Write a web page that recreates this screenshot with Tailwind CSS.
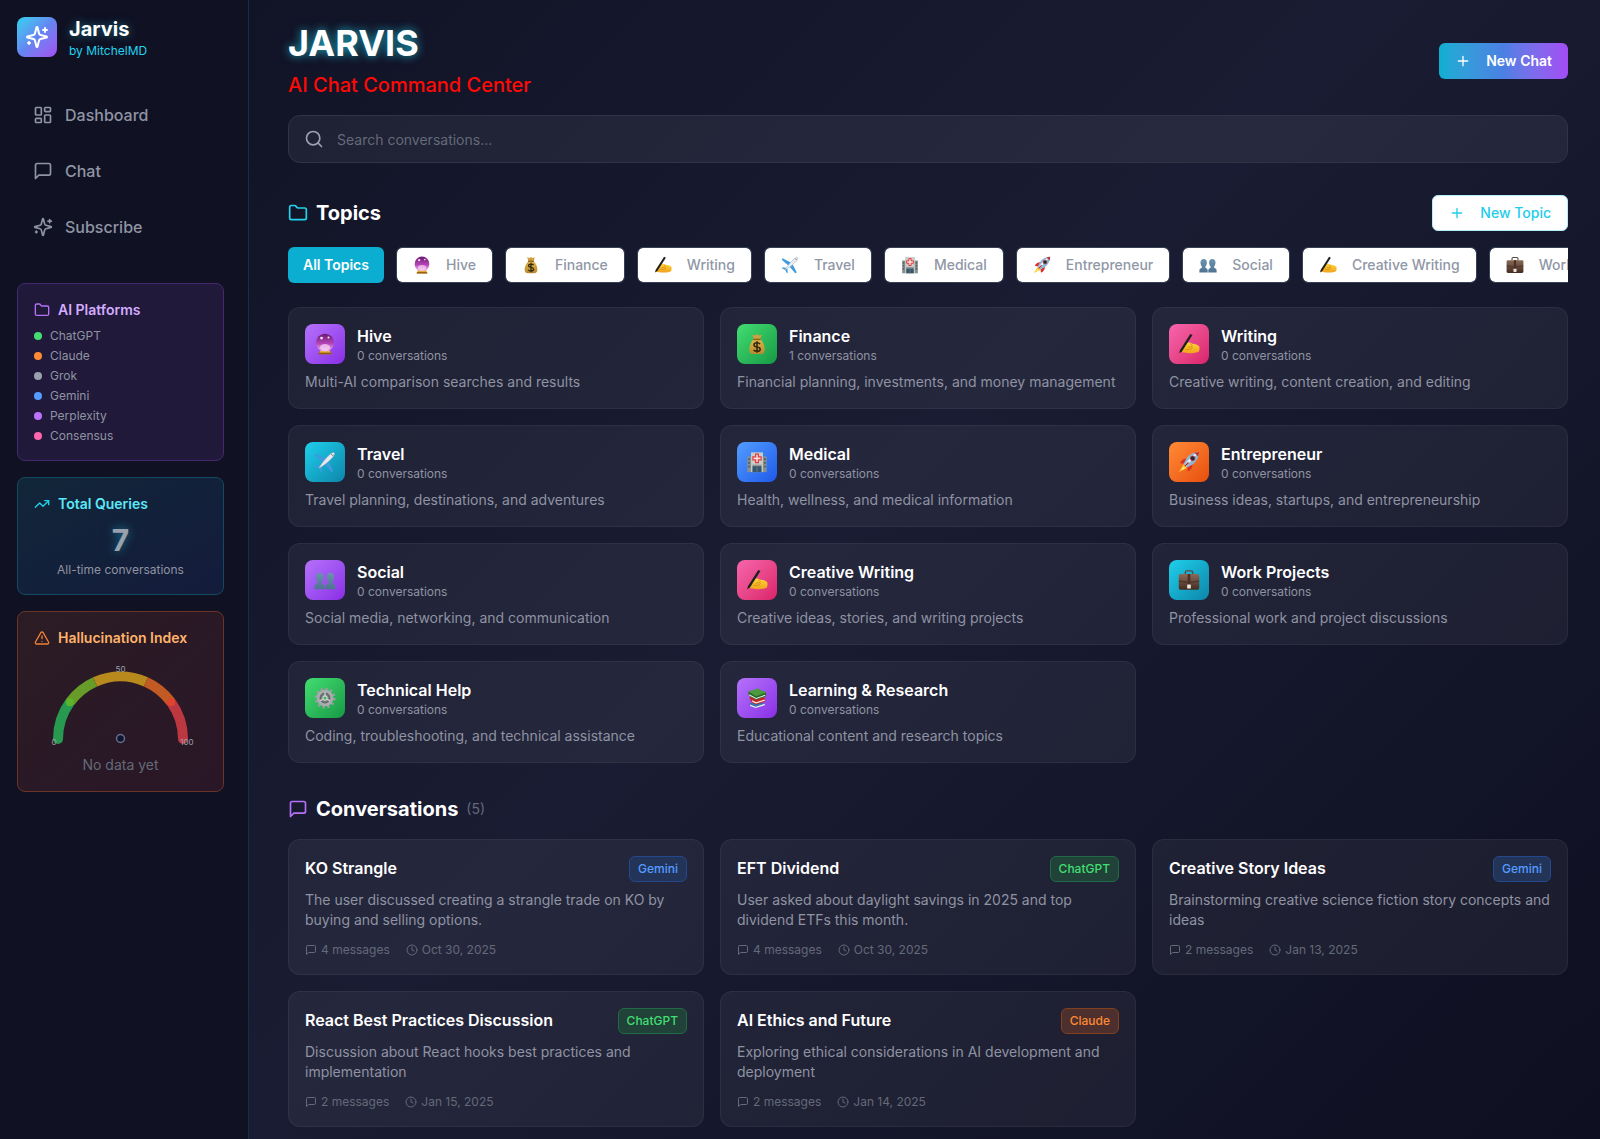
<!DOCTYPE html>
<html lang="en">
<head>
  <meta charset="UTF-8" />
  <meta name="viewport" content="width=device-width, initial-scale=1.0"/>
  <title>Jarvis - AI Chat Command Center</title>
  <script src="https://cdn.jsdelivr.net/npm/@tailwindcss/browser@4"></script>
</head>
<body class="min-h-screen bg-[#0f1123] font-['Inter','Liberation_Sans',sans-serif] text-white antialiased">

  <!-- Icons -->
  <svg class="absolute size-0" aria-hidden="true">
    <defs>
      <linearGradient id="gBall" x1="0" y1="0" x2="0" y2="1"><stop offset="0" stop-color="#6d1a70"/><stop offset=".55" stop-color="#b545b8"/><stop offset="1" stop-color="#f6c4f5"/></linearGradient>
      <linearGradient id="gGold" x1="0" y1="0" x2="0" y2="1"><stop offset="0" stop-color="#e0b64c"/><stop offset="1" stop-color="#b98a2c"/></linearGradient>
      <linearGradient id="gHand" x1="0" y1="0" x2="0" y2="1"><stop offset="0" stop-color="#ffd63a"/><stop offset="1" stop-color="#f0a21c"/></linearGradient>
      <linearGradient id="gCase" x1="0" y1="0" x2="0" y2="1"><stop offset="0" stop-color="#8a6a58"/><stop offset="1" stop-color="#452c20"/></linearGradient>
      <linearGradient id="gBust" x1="0" y1="0" x2="0" y2="1"><stop offset="0" stop-color="#6b93b0"/><stop offset="1" stop-color="#4f7391"/></linearGradient>

      <symbol id="sparkles" viewBox="0 0 24 24"><path d="M9.937 15.5A2 2 0 0 0 8.5 14.063l-6.135-1.582a.5.5 0 0 1 0-.962L8.5 9.936A2 2 0 0 0 9.937 8.5l1.582-6.135a.5.5 0 0 1 .963 0L14.063 8.5A2 2 0 0 0 15.5 9.937l6.135 1.581a.5.5 0 0 1 0 .964L15.5 14.063a2 2 0 0 0-1.437 1.437l-1.582 6.135a.5.5 0 0 1-.963 0z"/><path d="M20 3v4M22 5h-4M4 17v2M5 18H3"/></symbol>
      <symbol id="dashboard" viewBox="0 0 24 24"><rect width="7" height="9" x="3" y="3" rx="1"/><rect width="7" height="5" x="14" y="3" rx="1"/><rect width="7" height="9" x="14" y="12" rx="1"/><rect width="7" height="5" x="3" y="16" rx="1"/></symbol>
      <symbol id="message" viewBox="0 0 24 24"><path d="M21 15a2 2 0 0 1-2 2H7l-4 4V5a2 2 0 0 1 2-2h14a2 2 0 0 1 2 2z"/></symbol>
      <symbol id="folder" viewBox="0 0 24 24"><path d="M20 20a2 2 0 0 0 2-2V8a2 2 0 0 0-2-2h-7.9a2 2 0 0 1-1.69-.9L9.6 3.9A2 2 0 0 0 7.93 3H4a2 2 0 0 0-2 2v13a2 2 0 0 0 2 2Z"/></symbol>
      <symbol id="trend" viewBox="0 0 24 24"><path d="m22 7-8.5 8.5-5-5L2 17"/><path d="M16 7h6v6"/></symbol>
      <symbol id="alert" viewBox="0 0 24 24"><path d="m21.73 18-8-14a2 2 0 0 0-3.48 0l-8 14A2 2 0 0 0 4 21h16a2 2 0 0 0 1.73-3M12 9v4M12 17h.01"/></symbol>
      <symbol id="plus" viewBox="0 0 24 24"><path d="M5 12h14M12 5v14"/></symbol>
      <symbol id="search" viewBox="0 0 24 24"><circle cx="11" cy="11" r="8"/><path d="m21 21-4.3-4.3"/></symbol>
      <symbol id="clock" viewBox="0 0 24 24"><circle cx="12" cy="12" r="10"/><path d="M12 6v6l4 2"/></symbol>

      <symbol id="orb" viewBox="0 0 24 24"><path d="M6.500 19h11l1.500 4.200h-14z" fill="#c98a1d"/><path d="M5 21.600h14v1.600H5z" fill="#8d5b10"/><circle cx="12" cy="10.600" r="9.800" fill="url(#gBall)"/><ellipse cx="12" cy="15.500" rx="5.500" ry="3.500" fill="#f9d3f7" opacity=".7"/><circle cx="8.200" cy="5.500" r="1.500" fill="#fff" opacity=".9"/><circle cx="15.800" cy="4.800" r="1.100" fill="#fff" opacity=".9"/><path d="M7 19.400c3 1.400 7 1.400 10 0l.6 1.600H6.400z" fill="#f0b83a"/></symbol>
      <symbol id="money" viewBox="0 0 24 24"><path d="M8.500 6.500 6.800 1.800l3 1L12 1.200l2.200 1.600 3-1-1.700 4.700z" fill="#cfa043"/><path d="M8.500 6.500h7c3 3 5 7.500 5 11.500 0 3.500-1.700 5-4.200 5H7.700c-2.500 0-4.200-1.500-4.200-5 0-4 2-8.500 5-11.500z" fill="url(#gGold)"/><path d="M8 6.200h8v1.600H8z" fill="#8a6018"/><path d="M15.300 12.200c-.6-1-1.800-1.500-3.300-1.500-2 0-3.300.9-3.300 2.300 0 3.200 6.800 1.400 6.800 4.600 0 1.500-1.400 2.400-3.500 2.400-1.700 0-3-.6-3.600-1.700M12 9v12.600" fill="none" stroke="#33290f" stroke-width="1.700"/></symbol>
      <symbol id="writing" viewBox="0 0 24 24"><path d="M2.500 20.500c.5-3 2-6.500 4.500-8.500 2-1.600 4.500-2 6.500-1.400l2 1.200c2.500-.3 5.500.7 7.600 2.600.6 1.600.5 4-.3 5.800-3 1.600-8 2.300-12.500 1.700-2.500-.3-5-.6-7.800-1.400z" fill="url(#gHand)"/><path d="M8 17.500c2 .8 5 .6 7-.6 1-.8.7-2-.6-2l-4 .7M13.500 12l2.500 2" fill="none" stroke="#d88a12" stroke-width="1"/><path d="m1.200 22 1-3.400L13.400 1l2.400 1.200L4.500 19.900z" fill="#20201f"/></symbol>
      <symbol id="plane" viewBox="0 0 24 24"><path d="m13 8.500-11-5.500-1 2 8.800 7.500zM15.500 11l5.500 11-2 1-7.500-8.800z" fill="#3d9be0"/><path d="m6.500 15.500-5-.2-.4 1.100 4.600 2.200 2.200 4.500 1.100-.4-.3-5z" fill="#3d9be0"/><path d="M5.200 18.800C7 15 15.500 4.500 19.500 2.200c1.500-.9 3-.8 2.800.8-.2 1.400-.6 2-1.300 3C17.500 10.500 9 17.300 5.200 18.800z" fill="#e6ebef" stroke="#9aa6b1" stroke-width=".6"/><path d="m19 3.400 1.700 1.800" stroke="#42525e" stroke-width="1"/></symbol>
      <symbol id="hospital" viewBox="0 0 24 24"><path d="M1.500 6H22.500v17h-21z" fill="#87918f"/><path d="M5.500 1.500h13V23h-13z" fill="#c9cbc6"/><path d="M2.500 8h1.800v2H2.500zm0 4h1.800v2H2.500zm0 4h1.800v2H2.500zm17.200-8h1.800v2h-1.800zm0 4h1.800v2h-1.800zm0 4h1.800v2h-1.800z" fill="#4d5b63"/><path d="M10.500 3.500h3v3h3v3.200h-3v3h-3v-3h-3V6.500h3z" fill="#f4dede" stroke="#e13a3f" stroke-width="1.300"/><path d="M7 16.500h10V23H7z" fill="#35566b"/><path d="M12 17v6M7 15.500h10" stroke="#767c7c"/></symbol>
      <symbol id="rocket" viewBox="0 0 24 24"><path d="M6.500 14 1 22.800l8.800-4.300z" fill="#ffc928"/><path d="M6 17.500 3.600 20.800l3.700-1.800z" fill="#fff3a6"/><path d="M10 8.200C6.500 8 3.500 10 2.300 13.300l5 .5zM15.800 14.200c.3 3.500-1.700 6.500-5.200 8.200l-.5-5.500z" fill="#dd2d25"/><path d="M22.900 1.100C17.500 1 12 4 9 8.500l-3 5.700 3.900 3.900 5.600-3.100c4.500-3 7.500-8.500 7.400-13.900z" fill="#8fb6d6"/><path d="M22.900 1.100c-5 1.500-11.500 7-15.500 14.500l1.200 1.200z" fill="#e9f1f7"/><path d="m22.900 1.100-5 .8 4.200 4.200z" fill="#c0302b"/><circle cx="16" cy="8" r="2.500" fill="#1f2b36" stroke="#b8392f" stroke-width=".9"/><path d="m7.500 16.500 4-4" stroke="#b4231e" stroke-width="1.500"/></symbol>
      <symbol id="people" viewBox="0 0 24 24"><g fill="url(#gBust)"><path d="M6.300 4c2.600 0 4.200 1.900 4.200 4.800 0 2.300-.8 4.200-1.900 5.200v1.800c1.800.7 3 1.500 3 3.600V22H.5v-2.600c0-2.100 1.500-2.900 3.300-3.600V14C2.800 13 2 11.100 2 8.800 2 5.900 3.700 4 6.300 4z"/><path d="M17.700 4c2.600 0 4.300 1.900 4.300 4.800 0 2.300-.8 4.200-1.800 5.200v1.800c1.800.7 3.300 1.500 3.300 3.600V22H12.400v-2.600c0-2.100 1.200-2.900 3-3.600V14c-1.100-1-1.900-2.900-1.900-5.200 0-2.900 1.600-4.800 4.200-4.800z"/></g></symbol>
      <symbol id="briefcase" viewBox="0 0 24 24"><path d="M8 6V3.500C8 2.500 8.600 2 9.500 2h5c.9 0 1.500.5 1.500 1.500V6" fill="none" stroke="#5b4a42" stroke-width="1.500"/><rect x=".8" y="5.500" width="22.400" height="17" rx="1.800" fill="url(#gCase)"/><path d="M1 13c6 2 16 2 22 0" fill="none" stroke="#38231a" stroke-width=".8"/><path d="M10.500 5.500h3V17h-3z" fill="#4b3226"/><rect x="10" y="17" width="4" height="4.200" rx=".6" fill="#e8e4de"/></symbol>
      <symbol id="gear" viewBox="0 0 24 24"><circle cx="12" cy="12" r="10" fill="none" stroke="#9a9d9f" stroke-width="3" stroke-dasharray="2.600 2.640"/><circle cx="12" cy="12" r="7.300" fill="none" stroke="#a9acae" stroke-width="3.600"/><circle cx="12" cy="12" r="5.400" fill="#75787b" stroke="#5e6164" stroke-width="1"/><path d="M12 12V5.500M12 12l5.600 3.200M12 12l-5.600 3.200" stroke="#c4c6c8" stroke-width="1.600"/><circle cx="12" cy="12" r="2.300" fill="#42b565" stroke="#d5d7d8" stroke-width="1.200"/></symbol>
      <symbol id="books" viewBox="0 0 24 24"><path d="m4 17.500 12-2 5 3.500-11 3.700-6-2.700z" fill="#3a6fb0"/><path d="m4.500 19.200 6 2.300 10-3.200v1.500L10.500 23l-6-2.400z" fill="#e9ecef"/><path d="m3.500 11.500 3 5.700 4.500 1.800 10-3v-4L12 8z" fill="#c32a2a"/><path d="m6.500 14.500 4.500 2 9.500-2.800v1.400L11 18l-4-1.600z" fill="#f3ecea"/><path d="m2.500 5 .5 4.500L11 14l11-4V6z" fill="#256a29"/><path d="m3.500 8 7.500 4 10-3.600v1.200L11 13.200 3.500 9.300z" fill="#eef2ea"/><path d="M2.500 5 13 1.500 22 6l-11 4z" fill="#4c9a3d"/></symbol>
    </defs>
  </svg>

  <div class="flex min-h-screen bg-linear-135 from-[#0f1123] via-[#1a1c33] to-[#0e0f20]">

    <!-- Sidebar -->
    <aside class="w-[249px] shrink-0 border-r border-[#12304a] bg-[#101123] pt-[15px] pr-6 pl-[17px]">
      <div class="flex items-center gap-3">
        <div class="flex size-10 items-center justify-center rounded-lg bg-linear-to-br from-[#22d3ee] via-[#6385f2] to-[#a24bf3]">
          <svg class="size-6 fill-none stroke-white stroke-2" stroke-linecap="round" stroke-linejoin="round"><use href="#sparkles"/></svg>
        </div>
        <div>
          <p class="text-xl font-bold [text-shadow:0_0_10px_#22d3ee80]">Jarvis</p>
          <p class="text-xs text-[#22d3ee]">by MitchelMD</p>
        </div>
      </div>

      <nav class="mt-8 space-y-2 font-medium text-[#8f95a3]">
        <a href="#" class="flex h-12 items-center gap-3 rounded-lg px-4"><svg class="size-5 fill-none stroke-current stroke-2" stroke-linecap="round" stroke-linejoin="round"><use href="#dashboard"/></svg>Dashboard</a>
        <a href="#" class="flex h-12 items-center gap-3 rounded-lg px-4"><svg class="size-5 fill-none stroke-current stroke-2" stroke-linecap="round" stroke-linejoin="round"><use href="#message"/></svg>Chat</a>
        <a href="#" class="flex h-12 items-center gap-3 rounded-lg px-4"><svg class="size-5 fill-none stroke-current stroke-2" stroke-linecap="round" stroke-linejoin="round"><use href="#sparkles"/></svg>Subscribe</a>
      </nav>

      <div class="mt-8 space-y-4">
        <section class="rounded-lg border border-[#46286f] bg-[#201939] p-4">
          <h2 class="flex items-center gap-2 text-sm font-semibold text-[#d4acff]"><svg class="size-4 fill-none stroke-[#b571f7] stroke-2" stroke-linecap="round" stroke-linejoin="round"><use href="#folder"/></svg>AI Platforms</h2>
          <ul class="mt-2 space-y-1 text-xs text-[#8f93a2]">
            <li class="flex items-center gap-2"><span class="size-2 rounded-full bg-[#42de72]"></span>ChatGPT</li>
            <li class="flex items-center gap-2"><span class="size-2 rounded-full bg-[#ff8a35]"></span>Claude</li>
            <li class="flex items-center gap-2"><span class="size-2 rounded-full bg-[#99a1af]"></span>Grok</li>
            <li class="flex items-center gap-2"><span class="size-2 rounded-full bg-[#549cff]"></span>Gemini</li>
            <li class="flex items-center gap-2"><span class="size-2 rounded-full bg-[#ba74fb]"></span>Perplexity</li>
            <li class="flex items-center gap-2"><span class="size-2 rounded-full bg-[#fb66ae]"></span>Consensus</li>
          </ul>
        </section>

        <section class="rounded-lg border border-[#134a61] bg-linear-to-br from-[#112639] to-[#141b3b] p-4">
          <h2 class="flex items-center gap-2 text-sm font-semibold text-[#5ce7f8]"><svg class="size-4 fill-none stroke-[#22d3ee] stroke-2" stroke-linecap="round" stroke-linejoin="round"><use href="#trend"/></svg>Total Queries</h2>
          <p class="mt-2 text-center text-3xl font-bold text-[#99a1af] [text-shadow:0_0_10px_#22d3ee80]">7</p>
          <p class="mt-1 text-center text-xs text-[#8f93a2]">All-time conversations</p>
        </section>

        <section class="rounded-lg border border-[#6b3427] bg-linear-to-br from-[#2b1c24] to-[#291627] p-4">
          <h2 class="flex items-center gap-2 text-sm font-semibold text-[#ffb36a]"><svg class="size-4 fill-none stroke-[#f08035] stroke-2" stroke-linecap="round" stroke-linejoin="round"><use href="#alert"/></svg>Hallucination Index</h2>
          <svg class="mt-2 w-full overflow-visible" viewBox="0 0 173 99" fill="none" stroke-width="10">
            <path d="M24 83A62.500 62.500 0 0 1 35.900 46.300" stroke="#279a50"/>
            <circle cx="24" cy="83" r="5" fill="#279a50" stroke="none"/>
            <path d="M35.900 46.300A62.500 62.500 0 0 1 61.100 25.900" stroke="#669c27"/>
            <path d="M61.100 25.900A62.500 62.500 0 0 1 111.900 25.900" stroke="#b8891c"/>
            <path d="M111.900 25.900A62.500 62.500 0 0 1 137.100 46.300" stroke="#c25a24"/>
            <path d="M137.100 46.300A62.500 62.500 0 0 1 149 83" stroke="#bc3840"/>
            <circle cx="149" cy="83" r="5" fill="#bc3840" stroke="none"/>
            <circle cx="35.900" cy="46.300" r="4" fill="#5cb32c" stroke="none"/>
            <circle cx="137.100" cy="46.300" r="4" fill="#e0432f" stroke="none"/>
            <circle cx="86.500" cy="82.500" r="4" fill="#111530" stroke="#64708a" stroke-width="1.500"/>
            <g class="fill-[#99a1af] stroke-none text-[8px]" text-anchor="middle">
              <text x="20" y="89">0</text>
              <text x="86.500" y="16">50</text>
              <text x="153" y="89">100</text>
            </g>
          </svg>
          <p class="text-center text-sm text-[#636a78]">No data yet</p>
        </section>
      </div>
    </aside>

    <!-- Main -->
    <main class="min-w-0 flex-1 pt-[23px] pr-8 pb-3 pl-[39px]">
      <header class="flex items-center justify-between">
        <div>
          <h1 class="text-4xl font-bold [text-shadow:0_0_10px_#22d3eecc]">JARVIS</h1>
          <p class="mt-2 text-xl font-medium text-[#ff0a05]">AI Chat Command Center</p>
        </div>
        <button class="flex h-9 items-center gap-[15px] rounded-md bg-linear-to-r from-[#0bafd2] via-[#4a80e3] to-[#a24bf5] px-4 text-sm font-semibold"><svg class="size-4 fill-none stroke-current stroke-2" stroke-linecap="round"><use href="#plus"/></svg>New Chat</button>
      </header>

      <div class="relative mt-4">
        <svg class="absolute top-1/2 left-4 size-5 -translate-y-1/2 fill-none stroke-[#99a1af] stroke-2" stroke-linecap="round"><use href="#search"/></svg>
        <input type="text" aria-label="Search conversations" placeholder="Search conversations..." class="block h-12 w-full rounded-xl border border-[#2d3547] bg-white/6 pr-4 pl-12 text-sm placeholder:text-[#646a79]"/>
      </div>

      <section class="mt-8">
        <div class="flex items-center justify-between">
          <h2 class="flex items-center gap-2 text-xl font-bold"><svg class="size-5 fill-none stroke-[#22d3ee] stroke-2" stroke-linecap="round" stroke-linejoin="round"><use href="#folder"/></svg>Topics</h2>
          <button class="flex h-9 items-center gap-[15px] rounded-md border border-[#b5effa] bg-white px-4 text-sm font-medium text-[#22cdea]"><svg class="size-4 fill-none stroke-current stroke-2" stroke-linecap="round"><use href="#plus"/></svg>New Topic</button>
        </div>
        <div id="chips" class="mt-4 flex gap-3 overflow-hidden"></div>
        <div id="topics" class="mt-6 grid grid-cols-3 gap-4"></div>
      </section>

      <section class="mt-8">
        <h2 class="flex items-center gap-2 text-xl font-bold"><svg class="size-5 fill-none stroke-[#b571f7] stroke-2" stroke-linecap="round" stroke-linejoin="round"><use href="#message"/></svg>Conversations <span class="text-sm font-normal text-[#636a78]">(5)</span></h2>
        <div id="conversations" class="mt-4 grid grid-cols-3 gap-4"></div>
      </section>
    </main>
  </div>

  <script>
    const tiles = {
      purple: "from-[#b571fb] to-[#8a2be6]",
      green: "from-[#42de72] to-[#169a45]",
      pink: "from-[#f765ad] to-[#da2069]",
      cyan: "from-[#1fd0ec] to-[#0d86aa]",
      blue: "from-[#549cff] to-[#2058ea]",
      orange: "from-[#ff8a35] to-[#e84d0b]"
    };

    const badges = {
      Gemini: "border-[#25488c] bg-[#233459] text-[#549cff]",
      ChatGPT: "border-[#1f6b45] bg-[#214239] text-[#42de72]",
      Claude: "border-[#82401f] bg-[#4d302d] text-[#ff8a35]"
    };

    const topics = [
      ["Hive", 0, "Multi-AI comparison searches and results", "orb", "purple"],
      ["Finance", 1, "Financial planning, investments, and money management", "money", "green"],
      ["Writing", 0, "Creative writing, content creation, and editing", "writing", "pink"],
      ["Travel", 0, "Travel planning, destinations, and adventures", "plane", "cyan"],
      ["Medical", 0, "Health, wellness, and medical information", "hospital", "blue"],
      ["Entrepreneur", 0, "Business ideas, startups, and entrepreneurship", "rocket", "orange"],
      ["Social", 0, "Social media, networking, and communication", "people", "purple"],
      ["Creative Writing", 0, "Creative ideas, stories, and writing projects", "writing", "pink"],
      ["Work Projects", 0, "Professional work and project discussions", "briefcase", "cyan"],
      ["Technical Help", 0, "Coding, troubleshooting, and technical assistance", "gear", "green"],
      ["Learning &amp; Research", 0, "Educational content and research topics", "books", "purple"]
    ];

    const conversations = [
      ["KO Strangle", "Gemini", "The user discussed creating a strangle trade on KO by buying and selling options.", 4, "Oct 30, 2025"],
      ["EFT Dividend", "ChatGPT", "User asked about daylight savings in 2025 and top dividend ETFs this month.", 4, "Oct 30, 2025"],
      ["Creative Story Ideas", "Gemini", "Brainstorming creative science fiction story concepts and ideas", 2, "Jan 13, 2025"],
      ["React Best Practices Discussion", "ChatGPT", "Discussion about React hooks best practices and implementation", 2, "Jan 15, 2025"],
      ["AI Ethics and Future", "Claude", "Exploring ethical considerations in AI development and deployment", 2, "Jan 14, 2025"]
    ];

    document.getElementById("chips").innerHTML =
      `<button class="h-9 shrink-0 rounded-md bg-[#0badd0] px-[15px] text-sm font-semibold">All Topics</button>` +
      topics.map(([name, , , icon]) => `
        <button class="flex h-9 shrink-0 items-center gap-[15px] rounded-md border border-[#364153] bg-white bg-clip-padding px-4 text-sm font-medium text-[#9097a6]">
          <svg class="size-[18px]" aria-hidden="true"><use href="#${icon}"/></svg>${name}
        </button>`).join("");

    document.getElementById("topics").innerHTML = topics.map(([name, count, text, icon, tile]) => `
      <article class="rounded-xl border border-white/5 bg-white/5 p-4">
        <div class="flex items-center gap-3">
          <div class="flex size-10 items-center justify-center rounded-lg bg-linear-to-br ${tiles[tile]}">
            <svg class="size-[22px]" aria-hidden="true"><use href="#${icon}"/></svg>
          </div>
          <div>
            <h3 class="font-semibold">${name}</h3>
            <p class="text-xs text-[#8f93a2]">${count} conversations</p>
          </div>
        </div>
        <p class="mt-2 text-sm text-[#8f93a2]">${text}</p>
      </article>`).join("");

    document.getElementById("conversations").innerHTML = conversations.map(([title, platform, text, count, date]) => `
      <article class="rounded-xl border border-white/5 bg-white/5 p-4">
        <div class="flex items-start justify-between">
          <h3 class="font-semibold">${title}</h3>
          <span class="rounded-md border px-2 py-1 text-xs font-medium ${badges[platform]}">${platform}</span>
        </div>
        <p class="mt-2 text-sm text-[#8f93a2]">${text}</p>
        <div class="mt-3 flex gap-4 text-xs text-[#636a78]">
          <span class="flex items-center gap-1"><svg class="size-3 fill-none stroke-current stroke-2" stroke-linecap="round" stroke-linejoin="round"><use href="#message"/></svg>${count} messages</span>
          <span class="flex items-center gap-1"><svg class="size-3 fill-none stroke-current stroke-2" stroke-linecap="round"><use href="#clock"/></svg>${date}</span>
        </div>
      </article>`).join("");
  </script>
</body>
</html>
